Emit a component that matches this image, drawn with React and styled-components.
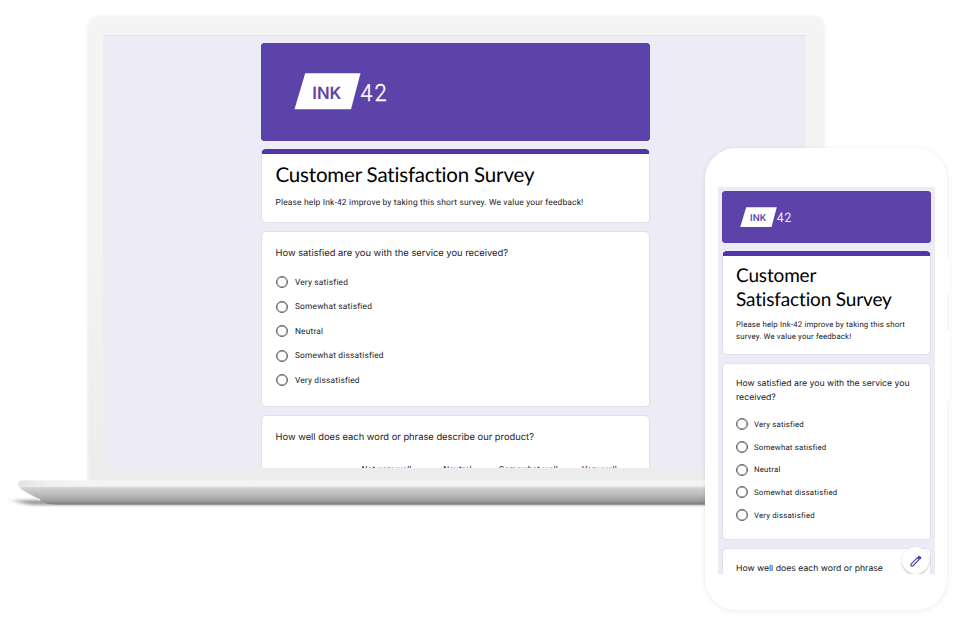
import React from "react";
import styled, { createGlobalStyle, css } from "styled-components";

const Global = createGlobalStyle`
  * { box-sizing: border-box; }
  html, body { margin: 0; padding: 0; background: #fff; }
  body { overflow: hidden; text-rendering: geometricPrecision; }
`;

const Stage = styled.main`
  position: relative;
  width: 960px;
  height: 622px;
  padding-top: 15px;
  overflow: hidden;
  background: #fff;
  font-family: Roboto, sans-serif;
  color: #202124;
`;

const Lid = styled.div`
  width: 740px;
  height: 466px;
  margin-left: 86px;
  padding: 20px 20px 12px 17px;
  border-radius: 13px 13px 0 0;
  background: linear-gradient(#f4f4f4 0%, #f3f3f3 50%, #ececec 100%);
  box-shadow: inset 2px 1px 2px #fafafa, inset -2px 0 2px #fafafa;
`;

const LaptopScreen = styled.div`
  height: 433px;
  padding: 8px 156px 0 157.5px;
  overflow: hidden;
  background: #edebf6;
  box-shadow: inset 0 1px #e3e1ec;
`;

const Base = styled.svg`
  display: block;
  margin-top: -1px;
`;

const Phone = styled.div`
  position: absolute;
  left: 705px;
  top: 148px;
  width: 242px;
  height: 462px;
  padding: 39px 12px 0 13px;
  border-radius: 31px;
  background: #fff;
  box-shadow: 0 0 0 1px rgba(0, 0, 0, 0.012), 0 1px 6px rgba(0, 0, 0, 0.07);
`;

const SideButton = styled.div`
  position: absolute;
  left: 241px;
  top: ${(p) => p.$top}px;
  width: 5px;
  height: ${(p) => p.$height}px;
  border: 1px solid #f5f5f5;
  border-left: 0;
  border-radius: 0 3px 3px 0;
  background: #fff;
`;

const PhoneScreen = styled.div`
  position: relative;
  height: 387px;
  padding: 4px 4px 0;
  overflow: hidden;
  background: #edebf6;
`;

const Form = styled.div`
  display: flex;
  flex-direction: column;
  gap: 8px;
`;

const Banner = styled.header`
  display: flex;
  height: ${(p) => (p.$compact ? 52 : 98)}px;
  padding: ${(p) => (p.$compact ? "16px 0 0 18px" : "30px 0 0 33px")};
  border-radius: 4px;
  background: #5c43a9;
  box-shadow: inset 0 0 0 1px #5a40a8;
`;

const Logo = styled.svg`
  display: block;
  overflow: visible;
  width: ${(p) => (p.$compact ? 52 : 94)}px;
  height: ${(p) => (p.$compact ? 20.2 : 36.5)}px;
`;

const Card = styled.section`
  flex: none;
  height: ${(p) => p.$height}px;
  padding: ${(p) => (p.$compact ? "0 13px" : "0 14px")};
  border: 1px solid #e2dfef;
  border-radius: 5px;
  background: #fff;
  ${(p) =>
    p.$accent &&
    css`
      border-top: 5px solid #5236a6;
    `}
`;

const Title = styled.h1`
  margin: 0;
  padding-top: ${(p) => (p.$compact ? 8 : 9.4)}px;
  font-family: Lato, sans-serif;
  font-size: ${(p) => (p.$compact ? 19 : 20.5)}px;
  line-height: 24px;
  font-weight: 400;
  letter-spacing: ${(p) => (p.$compact ? -0.15 : -0.18)}px;
  color: #000;
  white-space: pre;
`;

const Description = styled.p`
  margin: ${(p) => (p.$compact ? "7px 0 0" : "10.6px 0 0")};
  font-size: ${(p) => (p.$compact ? 7.8 : 8.42)}px;
  line-height: 11.5px;
  letter-spacing: 0.17px;
  white-space: pre;
`;

const Question = styled.h2`
  margin: 0;
  padding-top: ${(p) => (p.$compact ? 14.2 : 14.5)}px;
  font-family: Inter, sans-serif;
  font-size: ${(p) => (p.$compact ? 8.68 : 9.35)}px;
  line-height: 13.5px;
  font-weight: 400;
  letter-spacing: 0;
  white-space: pre;
`;

const Options = styled.div`
  display: flex;
  flex-direction: column;
  padding-top: ${(p) => (p.$compact ? 7.8 : 10.2)}px;
`;

const Option = styled.label`
  display: flex;
  align-items: center;
  gap: ${(p) => (p.$compact ? 6 : 7.4)}px;
  height: ${(p) => (p.$compact ? 22.7 : 24.4)}px;
  font-size: ${(p) => (p.$compact ? 7.8 : 8.35)}px;
  line-height: 12px;
  letter-spacing: 0.2px;
`;

const OptionText = styled.span`
  padding-top: 1.4px;
`;

const Radio = styled.span`
  width: 12px;
  height: 12px;
  border: 1px solid #5f6368;
  border-radius: 50%;
  box-shadow: inset 0 0 0 0.4px #5f6368;
`;

const Scale = styled.div`
  display: grid;
  grid-template-columns: repeat(4, 71px);
  justify-content: end;
  padding-top: 21px;
  font-size: 8.35px;
  line-height: 10px;
  letter-spacing: 0.2px;
  text-align: center;
  white-space: nowrap;
`;

const EditButton = styled.button`
  position: absolute;
  right: 6px;
  bottom: 0;
  display: grid;
  place-items: center;
  width: 27px;
  height: 27px;
  padding: 0;
  border: 0;
  border-radius: 50%;
  background: #fff;
  box-shadow: 0 1px 2px rgba(60, 64, 67, 0.35);
`;

const ANSWERS = [
  "Very satisfied",
  "Somewhat satisfied",
  "Neutral",
  "Somewhat dissatisfied",
  "Very dissatisfied",
];

function BrandLogo({ compact }) {
  return (
    <Logo $compact={compact} viewBox="0 0 94 36.5">
      <path d="M11.2 0.3H66.5L57 36.3H0.5Z" fill="#fff" />
      <text x="18.3" y="25.5" fill="#5c43a9" fontFamily="Inter" fontSize="17" fontWeight="600" textLength="29" lengthAdjust="spacingAndGlyphs">INK</text>
      <text x="66.3" y="28" fill="#fff" fontFamily="Roboto" fontSize="23.5" fontWeight="300" stroke="#fff" strokeWidth="0.4" letterSpacing="2.2" textLength="28.5" lengthAdjust="spacingAndGlyphs">42</text>
    </Logo>
  );
}

function AnswerList({ compact }) {
  return (
    <Options $compact={compact}>
      {ANSWERS.map((answer) => (
        <Option key={answer} $compact={compact}>
          <Radio />
          <OptionText>{answer}</OptionText>
        </Option>
      ))}
    </Options>
  );
}

function DesktopForm() {
  return (
    <Form>
      <Banner>
        <BrandLogo />
      </Banner>
      <Card $accent $height={74}>
        <Title>Customer Satisfaction Survey</Title>
        <Description>Please help Ink-42 improve by taking this short survey. We value your feedback!</Description>
      </Card>
      <Card $height={176}>
        <Question>How satisfied are you with the service you received?</Question>
        <AnswerList />
      </Card>
      <Card $height={120}>
        <Question>How well does each word or phrase describe our product?</Question>
        <Scale>
          <span>Not very well</span>
          <span>Neutral</span>
          <span>Somewhat well</span>
          <span>Very well</span>
        </Scale>
      </Card>
    </Form>
  );
}

function PhoneForm() {
  return (
    <Form>
      <Banner $compact>
        <BrandLogo compact />
      </Banner>
      <Card $compact $accent $height={104}>
        <Title $compact>{"Customer\nSatisfaction Survey"}</Title>
        <Description $compact>{"Please help Ink-42 improve by taking this short\nsurvey. We value your feedback!"}</Description>
      </Card>
      <Card $compact $height={177}>
        <Question $compact>{"How satisfied are you with the service you\nreceived?"}</Question>
        <AnswerList compact />
      </Card>
      <Card $compact $height={80}>
        <Question $compact>{"How well does each word or phrase"}</Question>
      </Card>
    </Form>
  );
}

function LaptopBase() {
  return (
    <Base width="960" height="40" viewBox="0 480 960 40">
      <defs>
        <linearGradient id="metal" x1="0" y1="480" x2="0" y2="505" gradientUnits="userSpaceOnUse">
          <stop offset="0" stopColor="#f6f6f6" />
          <stop offset="0.24" stopColor="#f3f3f3" />
          <stop offset="0.31" stopColor="#d2d2d2" />
          <stop offset="0.6" stopColor="#b9b9b9" />
          <stop offset="0.84" stopColor="#9e9e9e" />
          <stop offset="0.94" stopColor="#828282" />
          <stop offset="1" stopColor="#a4a4a4" />
        </linearGradient>
        <linearGradient id="rim" x1="17" x2="95" y1="0" y2="0" gradientUnits="userSpaceOnUse">
          <stop offset="0" stopColor="#e2e2e2" />
          <stop offset="0.4" stopColor="#f0f0f0" />
          <stop offset="1" stopColor="#f5f5f5" />
        </linearGradient>
        <filter id="soft" x="-5%" y="-200%" width="110%" height="500%">
          <feGaussianBlur stdDeviation="5 1.6" />
        </filter>
      </defs>
      <path d="M12 500H760V505H30Z" fill="#777" opacity="0.75" filter="url(#soft)" />
      <path d="M20 480.5H760V505H58C48 505 43 502 37 499C30 495 21 491 18.5 487C17 484 18 481 20 480.5Z" fill="url(#metal)" />
      <path d="M20 480.5H100V486H23C20 486 18 486 18 484Z" fill="url(#rim)" />
      <path d="M19 487C21 491 30 495 40 500" fill="none" stroke="#fff" strokeWidth="1.3" opacity="0.8" />
    </Base>
  );
}

function Pencil() {
  return (
    <svg width="12" height="12" viewBox="0 0 12 12" fill="none">
      <path d="M1 11V9.2L7.3 2.9L9.1 4.7L2.8 11Z" stroke="#5236a6" strokeWidth="1.1" strokeLinejoin="round" />
      <path d="M7.4 2.2L8.7 0.9Q9.3 0.4 9.9 0.9L11.1 2.1Q11.6 2.7 11.1 3.3L9.8 4.6Z" fill="#5236a6" />
    </svg>
  );
}

export default function App() {
  return (
    <>
      <Global />
      <Stage>
        <Lid>
          <LaptopScreen>
            <DesktopForm />
          </LaptopScreen>
        </Lid>
        <LaptopBase />
        <Phone>
          <SideButton $top={109} $height={38} />
          <SideButton $top={180} $height={74} />
          <PhoneScreen>
            <PhoneForm />
            <EditButton aria-label="Edit">
              <Pencil />
            </EditButton>
          </PhoneScreen>
        </Phone>
      </Stage>
    </>
  );
}
